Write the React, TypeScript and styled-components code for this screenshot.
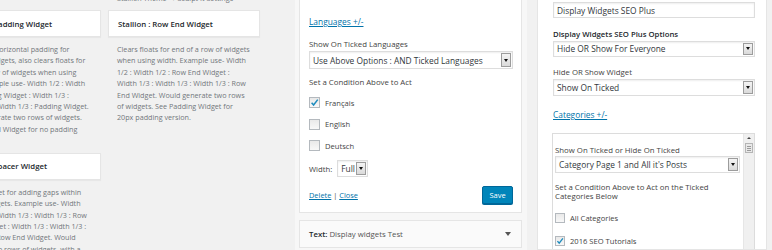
import React from "react";
import styled, { createGlobalStyle } from "styled-components";

const GlobalStyle = createGlobalStyle`
  html, body {
    margin: 0;
    padding: 0;
    background: #f1f1f1;
  }
  body {
    font-family: "Open Sans", "Liberation Sans", sans-serif;
    color: #444;
    overflow: hidden;
  }
`;

const Page = styled.div`
  width: 772px;
  height: 250px;
  overflow: hidden;
  display: flex;
  align-items: flex-start;
`;

/* ---------- available widgets (left) ---------- */

const LeftCol = styled.div`
  flex: none;
  width: 311px;
  margin-left: -51px;
  display: flex;
  flex-direction: column;
`;

const WidgetRow = styled.div<{ $gap: number }>`
  display: grid;
  grid-template-columns: 152px 152px;
  column-gap: 7px;
  align-items: start;
  margin-top: ${(p) => p.$gap}px;
`;

const WidgetCard = styled.div`
  height: 27px;
  box-sizing: border-box;
  background: #fff;
  border: 1px solid #e5e5e5;
  box-shadow: 0 1px 1px rgba(0, 0, 0, 0.04);
  padding: 0 9px;
  display: flex;
  align-items: center;
  font-size: 7.8px;
  font-weight: 600;
  color: #23282d;
  white-space: nowrap;
  overflow: hidden;
`;

const Desc = styled.div<{ $top?: number }>`
  margin-top: ${(p) => p.$top ?? 7}px;
  padding: 0 9px;
  font-size: 7.2px;
  line-height: 11.4px;
  color: #72777c;
  overflow: hidden;
`;

const Line = styled.span`
  display: block;
  white-space: nowrap;
`;

/* ---------- sidebar (middle) ---------- */

const Sidebar = styled.div`
  flex: none;
  width: 232px;
  height: 250px;
  margin-left: 35px;
  box-sizing: border-box;
  padding: 0 5px 0 4px;
  background: #f7f7f7;
`;

const OpenWidget = styled.div`
  background: #fff;
  border: 1px solid #e5e5e5;
  border-top: none;
  padding: 16px 8px 8px 9px;
  display: flex;
  flex-direction: column;
`;

const ToggleLink = styled.a<{ $top?: number }>`
  display: block;
  margin-top: ${(p) => p.$top ?? 0}px;
  font-size: 8.4px;
  line-height: 11px;
  color: #0073aa;
  text-decoration: underline;
  cursor: pointer;
`;

const FieldLabel = styled.div<{ $top: number; $bold?: boolean }>`
  margin-top: ${(p) => p.$top}px;
  margin-bottom: 1px;
  font-size: ${(p) => (p.$bold ? 7.75 : 7.8)}px;
  line-height: 11px;
  font-weight: ${(p) => (p.$bold ? 600 : 400)};
  color: ${(p) => (p.$bold ? "#23282d" : "#444")};
  white-space: nowrap;
`;

const SelectBox = styled.div<{ $h: number; $w?: number }>`
  display: flex;
  height: ${(p) => p.$h}px;
  width: ${(p) => (p.$w ? `${p.$w}px` : "auto")};
  box-sizing: border-box;
  border: 1px solid #ddd;
  background: #fff;
  box-shadow: inset 0 1px 2px rgba(0, 0, 0, 0.07);
`;

const SelectText = styled.div`
  flex: 1;
  display: flex;
  align-items: center;
  padding-left: 3px;
  font-size: 8.4px;
  color: #32373c;
  white-space: nowrap;
  overflow: hidden;
`;

const ArrowBtn = styled.div`
  flex: none;
  width: 10px;
  margin: 1px;
  box-sizing: border-box;
  border: 1px solid #9c9c9c;
  background: linear-gradient(#f4f4f4, #dadada);
  display: flex;
  align-items: center;
  justify-content: center;
`;

const Tri = styled.span`
  width: 0;
  height: 0;
  border-left: 2.5px solid transparent;
  border-right: 2.5px solid transparent;
  border-top: 3px solid #111;
`;

const Select = ({ value, h, w }: { value: string; h: number; w?: number }) => (
  <SelectBox $h={h} $w={w}>
    <SelectText>{value}</SelectText>
    <ArrowBtn>
      <Tri />
    </ArrowBtn>
  </SelectBox>
);

const Note = styled.div<{ $top: number; $lh?: number }>`
  margin-top: ${(p) => p.$top}px;
  font-size: 7.8px;
  line-height: ${(p) => p.$lh ?? 11}px;
  color: #444;
  white-space: nowrap;
`;

const CheckRow = styled.label<{ $top: number }>`
  display: flex;
  align-items: center;
  gap: 5px;
  height: 11px;
  margin-top: ${(p) => p.$top}px;
  font-size: 7.6px;
  color: #444;
`;

const Box = styled.span<{ $size: number }>`
  width: ${(p) => p.$size}px;
  height: ${(p) => p.$size}px;
  box-sizing: border-box;
  border: 1px solid #b4b9be;
  background: linear-gradient(#e9e9e9, #f8f8f8);
  display: flex;
  align-items: center;
  justify-content: center;
`;

const Check = ({ checked, size = 11 }: { checked?: boolean; size?: number }) => (
  <Box $size={size}>
    {checked && (
      <svg width={size - 2} height={size - 2} viewBox="0 0 10 10">
        <path d="M1.8 5.2 L4 7.8 L8.6 1.8" fill="none" stroke="#1e8cbe" strokeWidth="1.7" />
      </svg>
    )}
  </Box>
);

const WidthRow = styled.div`
  display: flex;
  align-items: center;
  gap: 5px;
  margin-top: 9px;
  font-size: 7.7px;
  color: #444;
`;

const Actions = styled.div`
  display: flex;
  align-items: center;
  justify-content: space-between;
  margin-top: 9px;
  height: 18px;
  font-size: 7.4px;
  color: #444;
`;

const ActionLink = styled.a`
  color: #0073aa;
  text-decoration: underline;
  cursor: pointer;
`;

const SaveButton = styled.button`
  height: 18px;
  width: 31px;
  padding: 0;
  border: 1px solid #006799;
  border-radius: 2px;
  background: #0085ba;
  box-shadow: 0 1px 0 #006799;
  color: #fff;
  font-family: inherit;
  font-size: 7.5px;
  cursor: pointer;
`;

const ClosedWidget = styled.div`
  margin-top: 7px;
  height: 28px;
  box-sizing: border-box;
  background: #fafafa;
  border: 1px solid #e5e5e5;
  padding: 0 9px;
  display: flex;
  align-items: center;
  justify-content: space-between;
  font-size: 7.8px;
  color: #555;
  white-space: nowrap;
`;

const ClosedTitle = styled.span`
  b {
    font-weight: 600;
    color: #23282d;
  }
`;

const Caret = styled.span`
  width: 0;
  height: 0;
  margin-right: 1px;
  border-left: 3px solid transparent;
  border-right: 3px solid transparent;
  border-top: 4px solid #555;
`;

/* ---------- widget settings (right) ---------- */

const SettingsPanel = styled.div`
  flex: none;
  width: 230px;
  height: 250px;
  margin-left: 10px;
  box-sizing: border-box;
  background: #fff;
  border: 1px solid #e5e5e5;
  border-top: none;
  padding: 2px 11px 0 15px;
  display: flex;
  flex-direction: column;
`;

const TextInput = styled.div`
  height: 16px;
  box-sizing: border-box;
  border: 1px solid #ddd;
  box-shadow: inset 0 1px 2px rgba(0, 0, 0, 0.07);
  padding-left: 3px;
  display: flex;
  align-items: center;
  font-size: 8.4px;
  color: #32373c;
`;

const ScrollBox = styled.div`
  margin-top: 13px;
  flex: 1;
  display: flex;
  border: 1px solid #dcdcdc;
  border-bottom: none;
  margin-left: -1px;
  overflow: hidden;
`;

const ScrollContent = styled.div`
  flex: 1;
  padding: 11px 3px 0 2px;
  display: flex;
  flex-direction: column;
`;

const ScrollBar = styled.div`
  flex: none;
  width: 10px;
  background: #f0f0f0;
  border-left: 1px solid #e6e6e6;
  display: flex;
  flex-direction: column;
  align-items: center;
`;

const UpArrow = styled.span`
  margin-top: 3px;
  width: 0;
  height: 0;
  border-left: 2px solid transparent;
  border-right: 2px solid transparent;
  border-bottom: 2.5px solid #444;
`;

const Thumb = styled.div`
  margin-top: 4px;
  width: 8px;
  height: 10px;
  box-sizing: border-box;
  border: 1px solid #b5b5b5;
  background: #e9e9e9;
  display: flex;
  flex-direction: column;
  justify-content: center;
  align-items: center;
  gap: 1px;
`;

const Grip = styled.span`
  width: 4px;
  height: 1px;
  background: #9a9a9a;
`;

export default function App() {
  return (
    <>
      <GlobalStyle />
      <Page>
        <LeftCol>
          <WidgetRow $gap={-6.7}>
            <div />
            <Desc $top={0}>
              <Line>Stallion Theme → Sculpt It Settings</Line>
            </Desc>
          </WidgetRow>

          <WidgetRow $gap={5.3}>
            <div>
              <WidgetCard>Stallion : Padding Widget</WidgetCard>
              <Desc>
                <Line>Adds 20px horizontal padding for</Line>
                <Line>between widgets, also clears floats for</Line>
                <Line>end of a row of widgets when using</Line>
                <Line>width. Example use- Width 1/2 : Width</Line>
                <Line>1/2 : Padding Widget : Width 1/3 :</Line>
                <Line>Width 1/3 : Width 1/3 : Padding Widget.</Line>
                <Line>Would generate two rows of widgets.</Line>
                <Line>See Row End Widget for no padding</Line>
              </Desc>
            </div>
            <div>
              <WidgetCard>Stallion : Row End Widget</WidgetCard>
              <Desc>
                <Line>Clears floats for end of a row of widgets</Line>
                <Line>when using width. Example use- Width</Line>
                <Line>1/2 : Width 1/2 : Row End Widget :</Line>
                <Line>Width 1/3 : Width 1/3 : Width 1/3 : Row</Line>
                <Line>End Widget. Would generate two rows</Line>
                <Line>of widgets. See Padding Widget for</Line>
                <Line>20px padding version.</Line>
              </Desc>
            </div>
          </WidgetRow>

          <WidgetRow $gap={17.5}>
            <div>
              <WidgetCard>Stallion : Spacer Widget</WidgetCard>
              <Desc>
                <Line>Spacer widget for adding gaps within</Line>
                <Line>rows of widgets. Example use- Width</Line>
                <Line>Width 1/3 : Width 1/3 : Width 1/3 : Row</Line>
                <Line>Spacer Widget : Width 1/3 : Width 1/3 :</Line>
                <Line>Width 1/3 : Row End Widget. Would</Line>
                <Line>generate two rows of widgets, with a</Line>
              </Desc>
            </div>
            <div />
          </WidgetRow>
        </LeftCol>

        <Sidebar>
          <OpenWidget>
            <ToggleLink>Languages +/-</ToggleLink>
            <FieldLabel $top={12.3}>Show On Ticked Languages</FieldLabel>
            <Select value="Use Above Options : AND Ticked Languages" h={18} />
            <Note $top={7.5}>Set a Condition Above to Act</Note>
            <CheckRow $top={9.5}>
              <Check checked />
              Français
            </CheckRow>
            <CheckRow $top={10.5}>
              <Check />
              English
            </CheckRow>
            <CheckRow $top={10.5}>
              <Check />
              Deutsch
            </CheckRow>
            <WidthRow>
              Width:
              <Select value="Full" h={17} w={31} />
            </WidthRow>
            <Actions>
              <span>
                <ActionLink>Delete</ActionLink> | <ActionLink>Close</ActionLink>
              </span>
              <SaveButton>Save</SaveButton>
            </Actions>
          </OpenWidget>
          <ClosedWidget>
            <ClosedTitle>
              <b>Text:</b> Display widgets Test
            </ClosedTitle>
            <Caret />
          </ClosedWidget>
        </Sidebar>

        <SettingsPanel>
          <TextInput>Display Widgets SEO Plus</TextInput>
          <FieldLabel $top={10.5} $bold>
            Display Widgets SEO Plus Options
          </FieldLabel>
          <Select value="Hide OR Show For Everyone" h={16.5} />
          <FieldLabel $top={9.5}>Hide OR Show Widget</FieldLabel>
          <Select value="Show On Ticked" h={17.5} />
          <ToggleLink $top={13}>Categories +/-</ToggleLink>
          <ScrollBox>
            <ScrollContent>
              <Note $top={0}>Show On Ticked or Hide On Ticked</Note>
              <Select value="Category Page 1 and All it's Posts" h={16.5} />
              <Note $top={10} $lh={9.6}>
                Set a Condition Above to Act on the Ticked
                <br />
                Categories Below
              </Note>
              <CheckRow $top={10.7}>
                <Check size={10} />
                All Categories
              </CheckRow>
              <CheckRow $top={12}>
                <Check size={10} checked />
                2016 SEO Tutorials
              </CheckRow>
            </ScrollContent>
            <ScrollBar>
              <UpArrow />
              <Thumb>
                <Grip />
                <Grip />
                <Grip />
              </Thumb>
            </ScrollBar>
          </ScrollBox>
        </SettingsPanel>
      </Page>
    </>
  );
}
